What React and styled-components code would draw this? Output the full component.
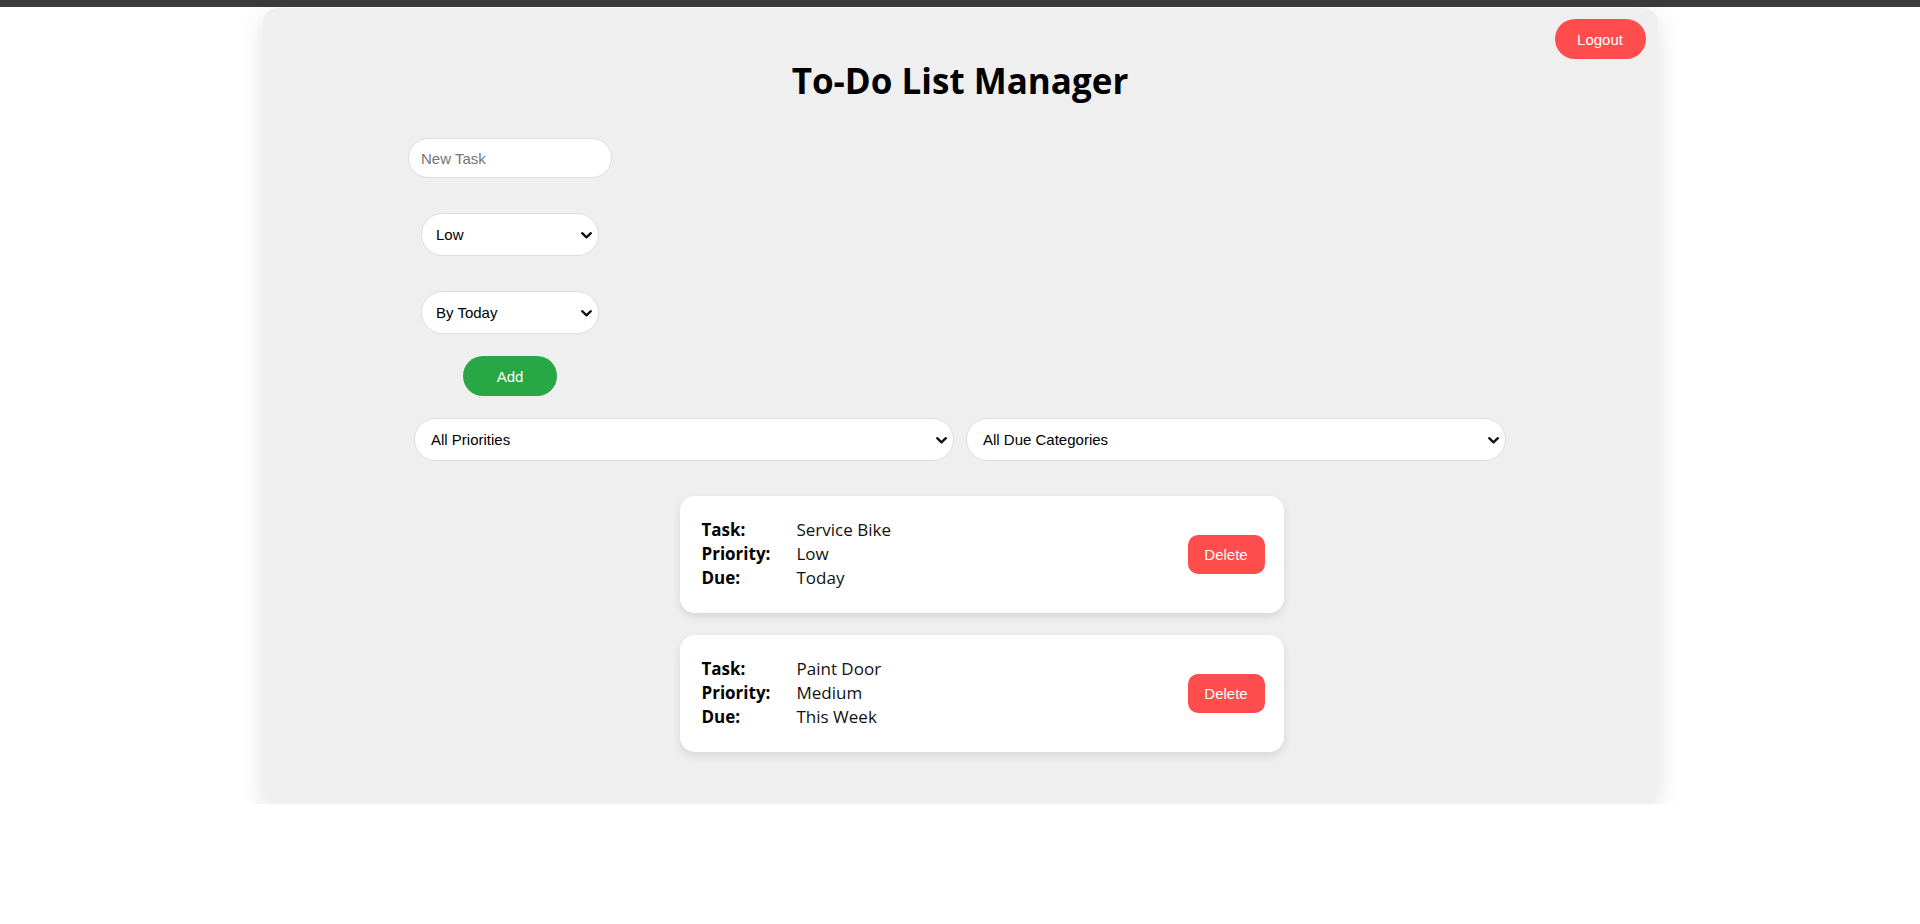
import React from "react";
import styled, { createGlobalStyle } from "styled-components";

const GlobalStyle = createGlobalStyle`
  *, *::before, *::after { box-sizing: border-box; }
  html, body { margin: 0; padding: 0; background: #ffffff; }
  body { font-family: "Open Sans", "Noto Sans", sans-serif; color: #000; }
`;

const TopBar = styled.div`
  height: 7px;
  background: #3c3c3c;
`;

const Container = styled.main`
  position: relative;
  width: 1395px;
  margin: 1px auto 0;
  padding: 20px 20px 52px;
  background: #efefef;
  border-radius: 15px;
  box-shadow: 0 8px 24px rgba(0, 0, 0, 0.12);
`;

const LogoutButton = styled.button`
  position: absolute;
  top: 11px;
  right: 12px;
  width: 91px;
  height: 40px;
  border: none;
  border-radius: 20px;
  background: #ff4d4d;
  color: #fff;
  font-family: "Liberation Sans", Arial, sans-serif;
  font-size: 15px;
  cursor: pointer;
`;

const Title = styled.h1`
  margin: 33px 0 0;
  text-align: center;
  font-family: "Open Sans", "Noto Sans", sans-serif;
  font-weight: 700;
  font-size: 35px;
  line-height: 40px;
  color: #000;
`;

const Controls = styled.div`
  width: 1104px;
  margin: 37px auto 0;
`;

const AddForm = styled.form`
  width: 204px;
  display: flex;
  flex-direction: column;
  align-items: center;
`;

const TaskInput = styled.input`
  width: 204px;
  height: 40px;
  padding: 0 12px;
  border: 1px solid #dddddd;
  border-radius: 20px;
  background: #fff;
  font-family: "Liberation Sans", Arial, sans-serif;
  font-size: 15px;
  color: #000;
  outline: none;
  &::placeholder { color: #757575; }
`;

const SelectWrap = styled.div`
  position: relative;
  width: ${(p) => p.$width || "178px"};
  flex: ${(p) => (p.$grow ? "1" : "none")};
  min-width: 0;
  margin-top: ${(p) => p.$top || "0"};
`;

const PillSelect = styled.select`
  appearance: none;
  -webkit-appearance: none;
  display: block;
  width: 100%;
  height: 43px;
  padding: 0 30px 0 ${(p) => p.$indent || "16px"};
  border: 1px solid #dddddd;
  border-radius: 22px;
  background: #fff;
  font-family: "Liberation Sans", Arial, sans-serif;
  font-size: 15px;
  color: #000;
  outline: none;
`;

const Chevron = styled.svg`
  position: absolute;
  top: 50%;
  right: 7px;
  width: 11px;
  height: 7px;
  margin-top: -3px;
  pointer-events: none;
`;

const AddButton = styled.button`
  width: 94px;
  height: 40px;
  margin-top: 22px;
  border: none;
  border-radius: 20px;
  background: #28a745;
  color: #fff;
  font-family: "Liberation Sans", Arial, sans-serif;
  font-size: 15px;
  cursor: pointer;
`;

const Filters = styled.div`
  display: flex;
  gap: 12px;
  padding: 0 6px;
  margin-top: 22px;
`;

const TaskList = styled.ul`
  list-style: none;
  margin: 35px 0 0;
  padding: 0 0 0 43px;
`;

const TaskCard = styled.li`
  width: 604px;
  margin: 0 auto;
  padding: 22px 19px 23px 22px;
  display: flex;
  align-items: center;
  justify-content: space-between;
  background: #fff;
  border-radius: 15px;
  box-shadow: 0 4px 10px rgba(0, 0, 0, 0.1);
  & + & { margin-top: 22px; }
`;

const Details = styled.dl`
  margin: 0;
  display: grid;
  grid-template-columns: 95px auto;
  font-family: "Open Sans", "Noto Sans", sans-serif;
  font-size: 17px;
  line-height: 24px;
`;

const Label = styled.dt`
  font-weight: 700;
  color: #000;
`;

const Value = styled.dd`
  margin: 0;
  font-weight: 400;
  color: #111;
`;

const DeleteButton = styled.button`
  width: 77px;
  height: 39px;
  border: none;
  border-radius: 10px;
  background: #ff4d4d;
  color: #fff;
  font-family: "Liberation Sans", Arial, sans-serif;
  font-size: 15px;
  cursor: pointer;
`;

function Dropdown({ options, width, grow, top, indent }) {
  return (
    <SelectWrap $width={width} $grow={grow} $top={top}>
      <PillSelect $indent={indent} defaultValue={options[0]}>
        {options.map((o) => (
          <option key={o}>{o}</option>
        ))}
      </PillSelect>
      <Chevron viewBox="0 0 11 7" aria-hidden="true">
        <path d="M1.2 1.2 L5.5 5.3 L9.8 1.2" fill="none" stroke="#111" strokeWidth="2.3" strokeLinecap="round" strokeLinejoin="round" />
      </Chevron>
    </SelectWrap>
  );
}

const tasks = [
  { name: "Service Bike", priority: "Low", due: "Today" },
  { name: "Paint Door", priority: "Medium", due: "This Week" },
];

export default function App() {
  return (
    <>
      <GlobalStyle />
      <TopBar />
      <Container>
        <LogoutButton>Logout</LogoutButton>
        <Title>To-Do List Manager</Title>
        <Controls>
          <AddForm onSubmit={(e) => e.preventDefault()}>
            <TaskInput placeholder="New Task" />
            <Dropdown top="35px" indent="14px" options={["Low", "Medium", "High"]} />
            <Dropdown top="35px" indent="14px" options={["By Today", "This Week", "This Month"]} />
            <AddButton type="submit">Add</AddButton>
          </AddForm>
          <Filters>
            <Dropdown grow width="auto" options={["All Priorities", "Low", "Medium", "High"]} />
            <Dropdown grow width="auto" options={["All Due Categories", "Today", "This Week"]} />
          </Filters>
        </Controls>
        <TaskList>
          {tasks.map((t) => (
            <TaskCard key={t.name}>
              <Details>
                <Label>Task:</Label>
                <Value>{t.name}</Value>
                <Label>Priority:</Label>
                <Value>{t.priority}</Value>
                <Label>Due:</Label>
                <Value>{t.due}</Value>
              </Details>
              <DeleteButton>Delete</DeleteButton>
            </TaskCard>
          ))}
        </TaskList>
      </Container>
    </>
  );
}
